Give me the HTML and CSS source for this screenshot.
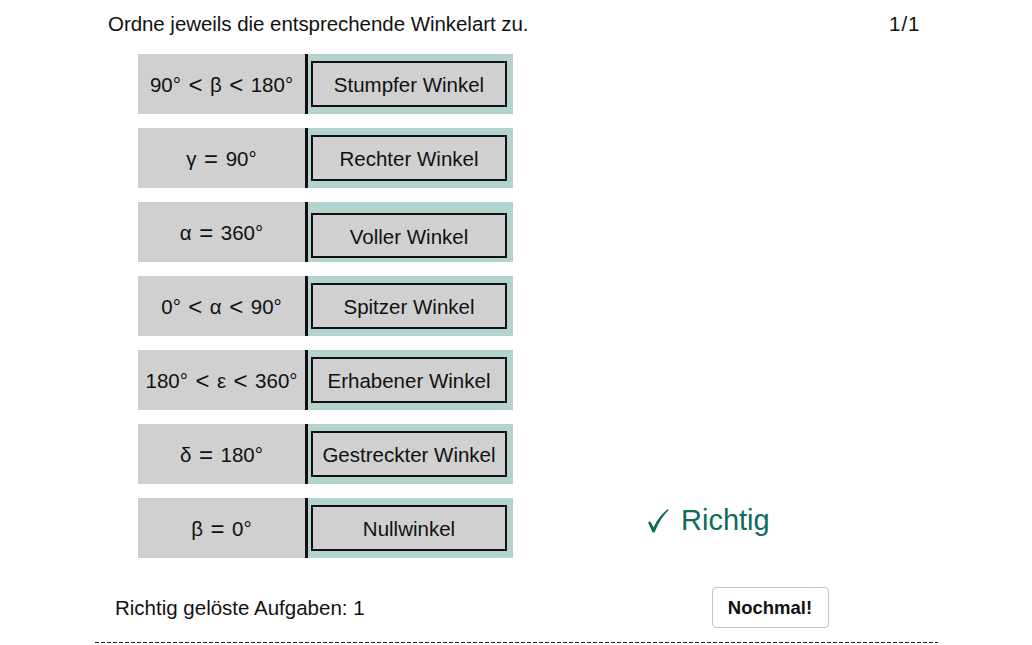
FILE: index.html
```html
<!DOCTYPE html>
<html lang="de">
<head>
<meta charset="utf-8">
<title>Winkelarten</title>
<link rel="stylesheet" href="styles.css">
</head>
<body>
<div class="page">
  <div class="header">
    <div class="title">Ordne jeweils die entsprechende Winkelart zu.</div>
    <div class="count">1/1</div>
  </div>
  <div class="main">
    <div class="rows">
      <div class="row"><div class="term">90°<span class="op">&lt;</span>β<span class="op">&lt;</span>180°</div><div class="slot"><div class="card">Stumpfer Winkel</div></div></div>
      <div class="row"><div class="term">γ<span class="op">=</span>90°</div><div class="slot"><div class="card">Rechter Winkel</div></div></div>
      <div class="row"><div class="term">α<span class="op">=</span>360°</div><div class="slot slot-low"><div class="card">Voller Winkel</div></div></div>
      <div class="row"><div class="term">0°<span class="op">&lt;</span>α<span class="op">&lt;</span>90°</div><div class="slot"><div class="card">Spitzer Winkel</div></div></div>
      <div class="row"><div class="term">180°<span class="op">&lt;</span>ε<span class="op">&lt;</span>360°</div><div class="slot"><div class="card">Erhabener Winkel</div></div></div>
      <div class="row"><div class="term">δ<span class="op">=</span>180°</div><div class="slot"><div class="card">Gestreckter Winkel</div></div></div>
      <div class="row"><div class="term">β<span class="op">=</span>0°</div><div class="slot"><div class="card">Nullwinkel</div></div></div>
    </div>
    <div class="status">
      <svg class="check" width="22" height="26" viewBox="0 0 22 26" aria-hidden="true"><path d="M1 14.5 L3.2 13.2 L6.6 19.2 C10 11.5 15 5.5 20.8 1 L21.6 2 C16.2 7.5 11.5 14.5 7.6 24.5 L5.6 24.5 Z" fill="#0f6b5c"/></svg>
      <span class="ok">Richtig</span>
    </div>
  </div>
  <div class="footer">
    <div class="solved">Richtig gelöste Aufgaben: 1</div>
    <button class="again">Nochmal!</button>
  </div>
  <div class="rule"></div>
</div>
</body>
</html>
```
FILE: styles.css
```css
html, body {
  margin: 0;
  padding: 0;
  background: #ffffff;
}
body {
  font-family: "Liberation Sans", Arial, sans-serif;
  font-size: 20.5px;
  color: #111111;
}
.page {
  width: 843px;
  margin: 0 auto;
}
.header {
  display: flex;
  justify-content: space-between;
  align-items: center;
  height: 24px;
  padding: 12px 17px 18px 13.5px;
  line-height: 24px;
}
.title {
  letter-spacing: -0.05px;
}
.count {
  letter-spacing: 1px;
}
.main {
  display: flex;
  padding-left: 43.5px;
}
.rows {
  display: flex;
  flex-direction: column;
  gap: 14px;
}
.row {
  display: flex;
  height: 60px;
}
.term {
  width: 167px;
  background: #d0d0d0;
  display: flex;
  align-items: center;
  justify-content: center;
  white-space: nowrap;
  border-right: 3px solid #111111;
  box-sizing: content-box;
  padding-top: 1px;
}
.op {
  font-size: 24px;
  margin: 0 7.5px;
  line-height: 1;
}
.slot {
  width: 205px;
  background: #b4d3ce;
  box-sizing: border-box;
  padding: 7px 6px 7px 3px;
}
.slot-low {
  padding-top: 11px;
  padding-bottom: 4px;
}
.card {
  height: 100%;
  box-sizing: border-box;
  border: 2px solid #111111;
  background: #d0d0d0;
  display: flex;
  align-items: center;
  justify-content: center;
  white-space: nowrap;
  padding-top: 2px;
}
.status {
  align-self: flex-end;
  margin: 0 0 21px 134px;
  display: flex;
  align-items: center;
  color: #0f6b5c;
  height: 34px;
}
.check {
  margin-right: 12px;
  margin-top: 2px;
}
.ok {
  font-size: 29px;
}
.footer {
  display: flex;
  align-items: center;
  justify-content: space-between;
  margin-top: 29px;
  padding: 0 109px 0 20.5px;
  height: 41px;
}
.again {
  width: 117px;
  height: 41px;
  background: #ffffff;
  border: 1px solid #c4c4c4;
  border-radius: 4px;
  font-family: "Liberation Sans", Arial, sans-serif;
  font-weight: bold;
  font-size: 18.5px;
  color: #111111;
  padding: 0;
}
.rule {
  margin-top: 14px;
  height: 1px;
  background: repeating-linear-gradient(to right, #222222 0 4px, transparent 4px 6px);
}
```
